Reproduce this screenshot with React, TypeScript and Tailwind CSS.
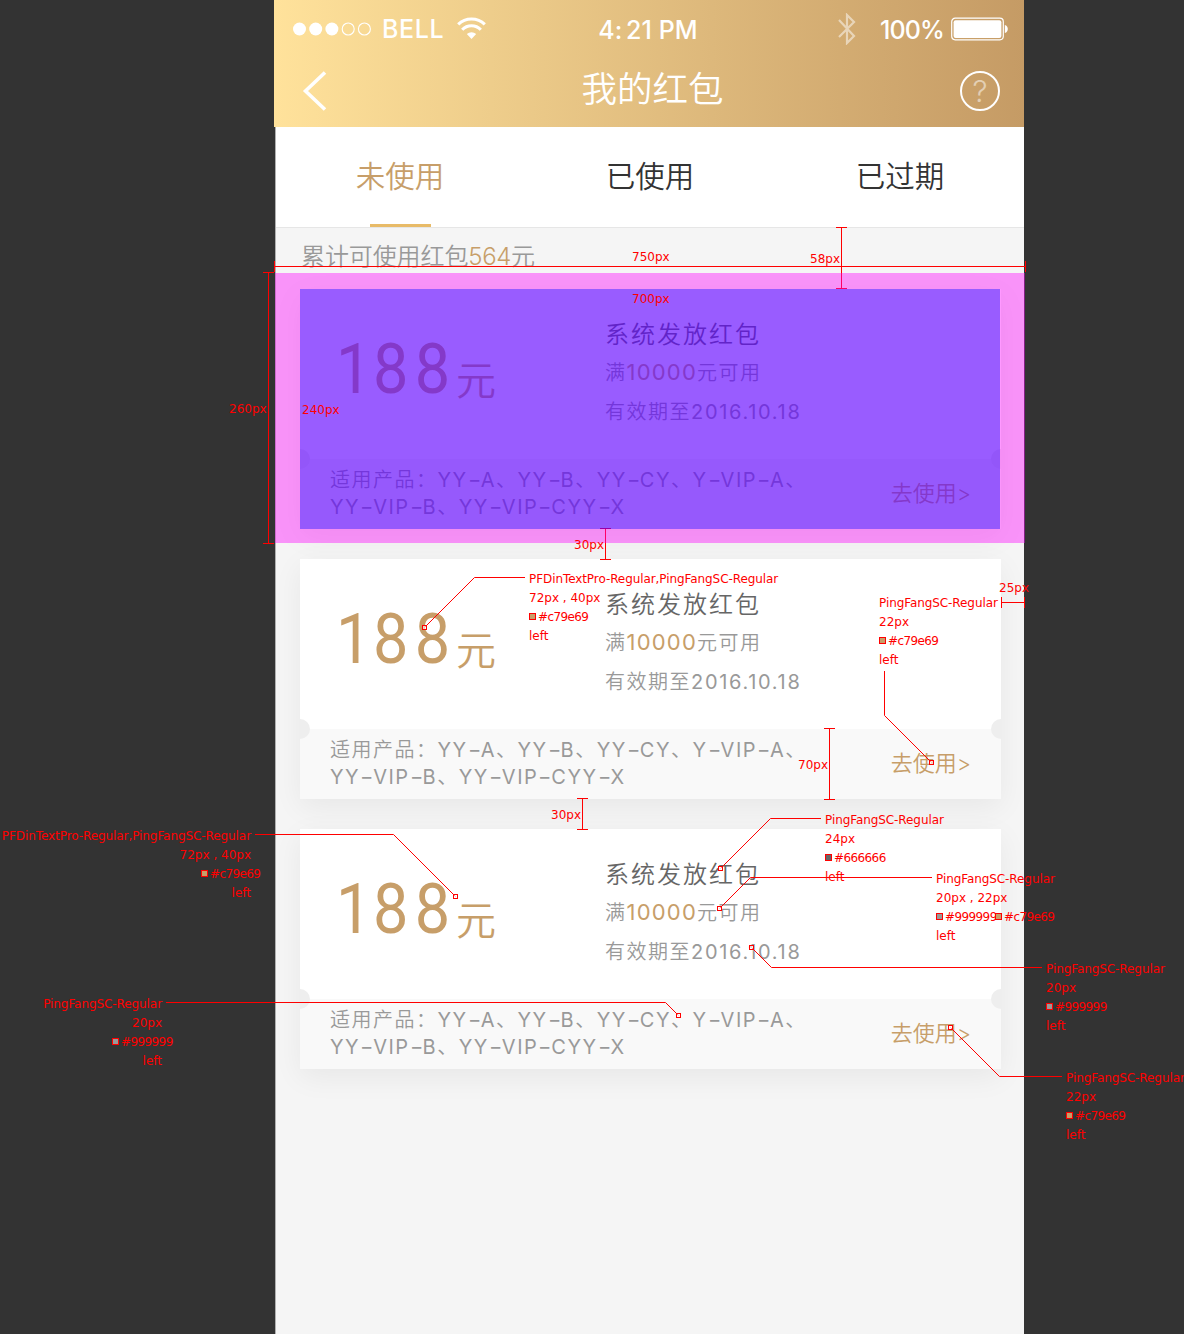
import React from "react";

const tabs = ["未使用", "已使用", "已过期"];

function Wide({ text }: { text: string }) {
  return (
    <span className="font-normal">
      {text.split("-").map((part, i) => (
        <React.Fragment key={i}>
          {i > 0 && <span className="inline-block w-[13px] origin-left scale-x-[1.45] tracking-normal"><span className="block w-[9px]">-</span></span>}
          {part}
        </React.Fragment>
      ))}
    </span>
  );
}

function StatusBar() {
  return (
    <div className="grid h-[57px] grid-cols-3 text-[25px] leading-[57px] text-white">
      <div className="flex items-center pl-[19px]">
        <svg width="79" height="14" viewBox="0 0 79 14" className="-mt-px shrink-0">
          <circle cx="6.5" cy="7" r="6.5" fill="#fff" />
          <circle cx="22.7" cy="7" r="6.5" fill="#fff" />
          <circle cx="38.9" cy="7" r="6.5" fill="#fff" />
          <circle cx="55.2" cy="7" r="6" fill="none" stroke="#fff" strokeWidth="1.1" />
          <circle cx="71.4" cy="7" r="6" fill="none" stroke="#fff" strokeWidth="1.1" />
        </svg>
        <span className="ml-[10px] w-[72px] font-[450] tracking-[0.6px]">BELL</span>
        <svg width="30" height="24" viewBox="0 0 30 24" className="-mt-[3px] ml-[3px] shrink-0">
          <g fill="none" stroke="#fff" strokeWidth="3.1">
            <path d="M1.2 8.4 A19 19 0 0 1 27.8 8.4" />
            <path d="M5.2 13.8 A12.8 12.8 0 0 1 23.8 13.8" />
          </g>
          <path d="M14.5 23 L9.8 18 A7 7 0 0 1 19.2 18 Z" fill="#fff" />
        </svg>
      </div>
      <div className="pt-[2px] pr-[2px] text-center font-[450] tracking-[0.1px]">
        4<span className="tracking-[3.5px]">:</span>21 PM
      </div>
      <div className="flex items-center justify-end pr-[15px]">
        <svg width="18" height="32" viewBox="0 0 18 32" className="-mt-[2px] mr-[24px] shrink-0 opacity-50">
          <path d="M1 7 L16 23 L9 30 V2 L16 9 L1 24" fill="none" stroke="#fff" strokeWidth="2.2" />
        </svg>
        <span className="mr-[7px] pt-[2px] font-[450] tracking-[-0.9px]">100%</span>
        <svg width="58" height="24" viewBox="0 0 58 24" className="-mt-[2px] shrink-0">
          <rect x="0.7" y="1.2" width="51.6" height="21.6" rx="3.5" fill="none" stroke="#fff" strokeWidth="1.2" />
          <rect x="2.6" y="3.2" width="47.8" height="17.8" rx="2" fill="#fff" />
          <path d="M53.8 8 C57.8 9 57.8 15 53.8 16 Z" fill="#fff" />
        </svg>
      </div>
    </div>
  );
}

function NavBar() {
  return (
    <div className="grid h-[70px] grid-cols-3 items-center pb-[3px] text-white">
      <svg width="26" height="40" viewBox="0 0 26 40" className="ml-[28px]">
        <path d="M23 1.5 L3.5 20 L23 38.5" fill="none" stroke="#fff" strokeWidth="3.6" />
      </svg>
      <h1 className="pb-[2px] pl-[7px] text-center text-[35.5px] leading-[58px] font-[350] whitespace-nowrap">我的红包</h1>
      <div className="mr-[24px] flex h-[40px] w-[40px] items-center justify-center justify-self-end rounded-full border-2 border-white text-[30px] leading-none font-light">
        <span className="opacity-50">?</span>
      </div>
    </div>
  );
}

function Coupon() {
  return (
    <article className="relative flex h-[240px] w-[701px] flex-col bg-white shadow-[0_8px_28px_rgba(0,0,0,0.06)]">
      <div className="flex h-[170px]">
        <div className="flex w-[305px] items-baseline pl-[36px] text-[#c79e69]">
          <span className="w-[120px] origin-left scale-x-[0.9] font-[Roboto] text-[70px] leading-[161px]">
            <span className="tracking-[1.7px]">1</span>
            <span className="tracking-[7.2px]">8</span>8
          </span>
          <span className="translate-y-[2px] text-[40px] leading-none font-[350]">元</span>
        </div>
        <div className="pt-[28px] text-[20px] leading-[39px] font-[350] tracking-[1.5px] whitespace-nowrap text-[#999]">
          <h2 className="text-[24px] leading-[36px] tracking-[2px] text-[#666]">系统发放红包</h2>
          <p>
            满<span className="text-[22px] font-normal tracking-[1.2px] text-[#c79e69]">10000</span>元可用
          </p>
          <p>
            有效期至<span className="font-normal tracking-[1.7px]">2016.10.18</span>
          </p>
        </div>
      </div>
      <div className="flex h-[70px] items-center justify-between bg-[#f9f9f9] pr-[30px] pl-[30px]">
        <p className="text-[20px] leading-[27px] font-[350] tracking-[1.5px] whitespace-nowrap text-[#999]">
          适用产品：
          <Wide text="YY-A、YY-B、YY-CY、Y-VIP-A、" />
          <br />
          <Wide text="YY-VIP-B、YY-VIP-CYY-X" />
        </p>
        <a className="pb-[2px] text-[22px] font-[350] text-[#c79e69]">去使用&gt;</a>
      </div>
      <span className="absolute top-[160px] left-0 h-[20px] w-[10px] rounded-r-full bg-[#eee]" />
      <span className="absolute top-[160px] right-0 h-[20px] w-[10px] rounded-l-full bg-[#eee]" />
    </article>
  );
}

const leaders = [
  "525,577.5 474.5,577.5 424.5,627.5",
  "884.5,671 884.5,715.5 931.5,762.5",
  "821,818.5 770.5,818.5 720.5,868.5",
  "932,877.5 750.5,877.5 719.5,908.5",
  "1042,967.5 771.5,967.5 751.5,947.5",
  "255,834.5 393.5,834.5 455.5,896.5",
  "166,1002.5 665.5,1002.5 678.5,1015.5",
  "1062,1076.5 999.5,1076.5 950.5,1027.5",
];

const rulers = [
  "M274 266.5H1025 M274.5 261V272 M1025.5 261V272",
  "M841.5 227V289 M836 227.5H847 M836 288.5H847",
  "M268.5 272V544 M263 272.5H274 M263 543.5H274",
  "M605.5 528V559 M600 528.5H611 M600 559.5H611",
  "M1001 602.5H1025 M1001.5 597V608 M1024.5 597V608",
  "M829.5 728V800 M824 728.5H835 M824 799.5H835",
  "M582.5 798V829 M577 798.5H588 M577 829.5H588",
];

function MeasureLines() {
  return (
    <svg className="absolute top-0 left-0" width="1184" height="1334" fill="none" stroke="#f00">
      {rulers.map((d) => (
        <path key={d} d={d} />
      ))}
      {leaders.map((p) => {
        const [x, y] = p.split(" ")[2].split(",").map(Number);
        return (
          <g key={p}>
            <polyline points={p} />
            <rect x={x - 2} y={y - 2} width="4" height="4" fill="#fff" fillOpacity="0.6" />
          </g>
        );
      })}
    </svg>
  );
}

const measures = [
  { text: "750px", place: "left-[632px] top-[248px]" },
  { text: "58px", place: "left-[810px] top-[250px]" },
  { text: "700px", place: "left-[632px] top-[290px]" },
  { text: "240px", place: "left-[302px] top-[401px]" },
  { text: "260px", place: "left-[229px] top-[400px]" },
  { text: "30px", place: "left-[574px] top-[536px]" },
  { text: "25px", place: "left-[999px] top-[579px]" },
  { text: "70px", place: "left-[798px] top-[756px]" },
  { text: "30px", place: "left-[551px] top-[806px]" },
];

const gold = { code: "#c79e69", fill: "bg-[#c79e69]" };
const gray = { code: "#999999", fill: "bg-[#999999]" };
const dark = { code: "#666666", fill: "bg-[#666666]" };

type Note = { font: string; size: string; colors: { code: string; fill: string }[]; place: string; end?: boolean };

const notes: Note[] = [
  { font: "PFDinTextPro-Regular,PingFangSC-Regular", size: "72px , 40px", colors: [gold], place: "left-[529px] top-[570px]" },
  { font: "PingFangSC-Regular", size: "22px", colors: [gold], place: "left-[879px] top-[594px]" },
  { font: "PingFangSC-Regular", size: "24px", colors: [dark], place: "left-[825px] top-[811px]" },
  { font: "PingFangSC-Regular", size: "20px , 22px", colors: [gray, gold], place: "left-[936px] top-[870px]" },
  { font: "PingFangSC-Regular", size: "20px", colors: [gray], place: "left-[1046px] top-[960px]" },
  { font: "PingFangSC-Regular", size: "22px", colors: [gold], place: "left-[1066px] top-[1069px]" },
  { font: "PFDinTextPro-Regular,PingFangSC-Regular", size: "72px , 40px", colors: [gold], place: "right-[933px] top-[827px]", end: true },
  { font: "PingFangSC-Regular", size: "20px", colors: [gray], place: "right-[1022px] top-[995px]", end: true },
];

function NoteLabel({ note }: { note: Note }) {
  return (
    <div className={`absolute flex flex-col ${note.end ? "items-end" : "items-start"} ${note.place}`}>
      <span className="tracking-[-0.08px]">{note.font}</span>
      <span>{note.size}</span>
      <span className={`flex items-center ${note.end ? "-mr-[9px]" : ""}`}>
        {note.colors.map((c) => (
          <span key={c.code} className="flex w-[59px] items-center gap-[2px] tracking-[-0.6px]">
            <i className={`mb-[2px] h-[7px] w-[7px] shrink-0 border border-[#f00] ${c.fill}`} />
            {c.code}
          </span>
        ))}
      </span>
      <span>left</span>
    </div>
  );
}

export default function App() {
  return (
    <div className="relative h-[1334px] w-[1184px] overflow-hidden bg-[#333] font-[Inter,'Noto_Sans_CJK_SC',sans-serif]">
      <main className="ml-[274px] flex h-full w-[750px] flex-col">
        <header className="h-[127px] shrink-0 bg-linear-to-r from-[#ffe29b] to-[#c59b65]">
          <StatusBar />
          <NavBar />
        </header>
        <section className="ml-px flex-1 overflow-hidden border-l border-[#b0b0b0] bg-[#f5f5f5]">
          <nav className="-ml-px flex h-[101px] border-b border-[#e6e6e6] bg-white">
            {tabs.map((tab, i) => (
              <div
                key={tab}
                className={`relative flex w-[250px] shrink-0 justify-center text-[29.5px] leading-[99px] font-[350] ${i === 0 ? "text-[#c79e69]" : "text-[#333]"}`}
              >
                {tab}
                {i === 0 && <span className="absolute bottom-0 h-[3px] w-[61px] bg-[#e8bb68]" />}
              </div>
            ))}
          </nav>
          <p className="h-[61px] pl-[25px] text-[24px] leading-[58px] font-[350] tracking-[-0.1px] text-[#999]">
            累计可使用红包<span className="tracking-[-0.4px] text-[#c79e69]">564</span>元
          </p>
          <div className="flex flex-col gap-[30px] pl-[24px]">
            <Coupon />
            <Coupon />
            <Coupon />
          </div>
        </section>
      </main>

      <MeasureLines />
      <div className="absolute top-[273px] left-[275px] h-[270px] w-[750px] bg-[#ff00ff]/40" />
      <div className="absolute top-[289px] left-[300px] h-[240px] w-[700px] bg-[#0000ff]/40" />

      <div className="absolute inset-0 font-['DejaVu_Sans'] text-[12px] leading-[19px] whitespace-nowrap text-[#f00]">
        {measures.map((m) => (
          <span key={m.place} className={`absolute ${m.place}`}>
            {m.text}
          </span>
        ))}
        {notes.map((n) => (
          <NoteLabel key={n.place} note={n} />
        ))}
      </div>
    </div>
  );
}
